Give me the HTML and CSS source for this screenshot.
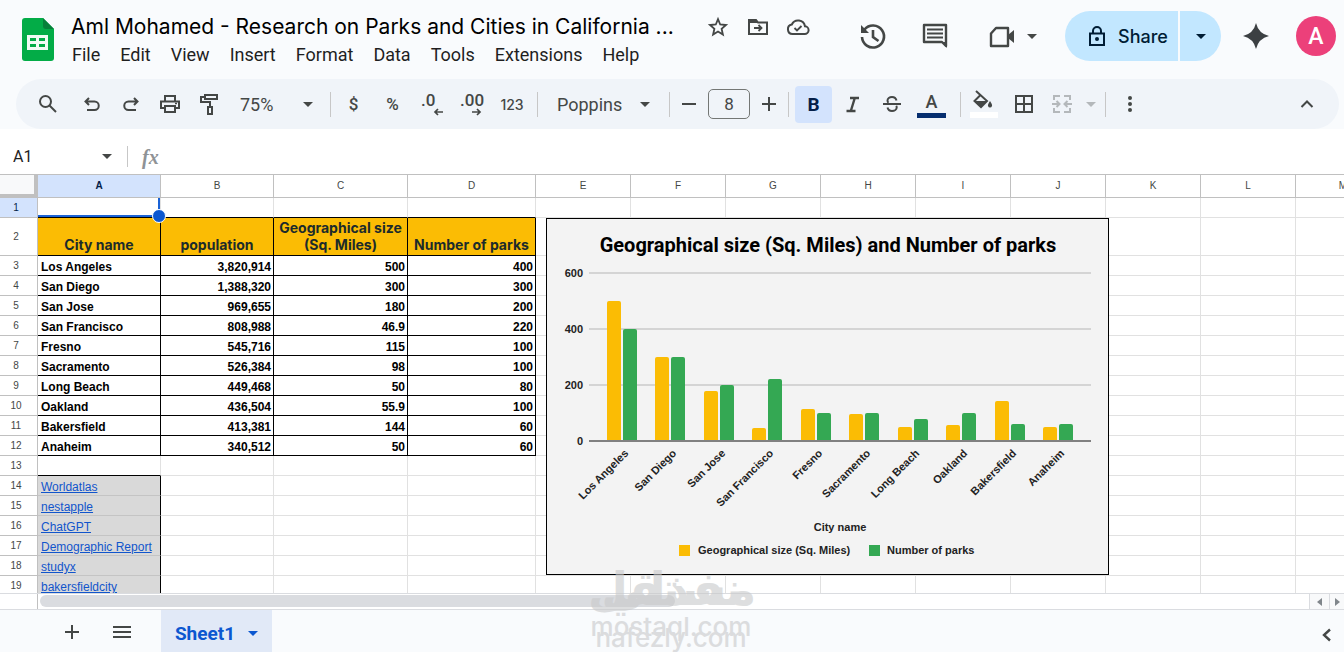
FILE: index.html
```html
<!DOCTYPE html>
<html lang="en">
<head>
<meta charset="utf-8">
<title>Research on Parks and Cities in California</title>
<link rel="stylesheet" href="styles.css">
</head>
<body>
<header class="header">
  <a class="logo" href="#" aria-label="Sheets home"><svg width="32" height="44" viewBox="0 0 32 44"><path d="M3 0h18l11 11v29q0 3-3 3H3q-3 0-3-3V3q0-3 3-3z" fill="#03ac47"/><path d="M21 0l11 11h-8q-3 0-3-3z" fill="#07803a"/><path d="M5 17h21v15H5z" fill="#f1fbf4"/><path d="M8 20h6v3H8zm9 0h6v3h-6zm-9 6h6v3H8zm9 0h6v3h-6z" fill="#03ac47"/></svg></a>
  <div class="doc">
    <div class="doc-top">
      <h1 class="title">Aml Mohamed - Research on Parks and Cities in California ...</h1>
      <button class="mini" aria-label="Star"><svg width="24" height="24" viewBox="0 0 24 24"><path fill="none" stroke="#444746" stroke-width="1.8" d="M12 4.2l2.2 5.3 5.8.5-4.400 3.800 1.300 5.700-4.900-3-4.900 3 1.300-5.700L4 10l5.800-.5z"/></svg></button>
      <button class="mini" aria-label="Move"><svg width="24" height="24" viewBox="0 0 24 24" fill="none" stroke="#444746" stroke-width="2"><path d="M3 6v13h18V7.500h-9L10 5H3z"/><path d="M3 6h8v2H3z" fill="#444746" stroke="none"/><path d="M8 13h7M12.500 10l3 3-3 3" stroke-width="1.800"/></svg></button>
      <button class="mini" aria-label="Saved to Drive"><svg width="24" height="24" viewBox="0 0 24 24" fill="none" stroke="#444746" stroke-width="2"><path d="M6.500 19h12a3.800 3.800 0 0 0 .5-7.700A7 7 0 0 0 5.800 9.500 4.800 4.800 0 0 0 6.500 19z"/><path d="M8.500 13l2.500 2.500 4.500-4.500" stroke-width="1.800"/></svg></button>
    </div>
    <nav class="menu">
      <a href="#">File</a><a href="#">Edit</a><a href="#">View</a><a href="#">Insert</a><a href="#">Format</a><a href="#">Data</a><a href="#">Tools</a><a href="#">Extensions</a><a href="#">Help</a>
    </nav>
  </div>
  <div class="actions">
    <button class="act" aria-label="Version history"><svg width="30" height="30" viewBox="0 0 30 30" fill="none" stroke="#444746" stroke-width="2.600"><path d="M4 16A11 11 0 1 0 6.500 8.500"/><path d="M15 9v7l5.500 4"/><path d="M3 4v8h8z" fill="#444746" stroke="none"/></svg></button>
    <button class="act comments" aria-label="Comments"><svg width="30" height="30" viewBox="0 0 30 30"><path fill="none" stroke="#444746" stroke-width="2.400" stroke-linejoin="round" d="M4 4h22v21l-4-4H4z"/><path d="M22 21h5v6z" fill="#444746"/><path d="M7 8.500h16M7 12.500h16M7 16.500h16" stroke="#444746" stroke-width="2.200"/></svg></button>
    <button class="act meet" aria-label="Meet"><svg width="30" height="30" viewBox="0 0 30 30"><path fill="none" stroke="#444746" stroke-width="2.400" stroke-linejoin="round" d="M9 7h12v18H4V12.500z"/><path d="M21 14l6-5v13l-6-5z" fill="#444746"/></svg><svg width="10" height="5" viewBox="0 0 10 5"><path d="M0 0h10L5 5z" fill="#444746"/></svg></button>
    <div class="share">
      <button class="share-main"><svg width="20" height="22" viewBox="0 0 20 22"><path fill="none" stroke="#001d35" stroke-width="2" d="M3 8.500h14V20H3zM6 8.500V6a4 4 0 0 1 8 0v2.500"/><circle cx="10" cy="14" r="2" fill="#001d35"/></svg>Share</button>
      <button class="share-more" aria-label="Share options"><svg width="10" height="5" viewBox="0 0 10 5"><path d="M0 0h10L5 5z" fill="#001d35"/></svg></button>
    </div>
    <button class="act spark" aria-label="Gemini"><svg width="26" height="26" viewBox="0 0 26 26"><path d="M13 0Q15.500 10.500 26 13 15.500 15.500 13 26 10.500 15.500 0 13 10.500 10.500 13 0z" fill="#3c4043"/></svg></button>
    <button class="avatar">A</button>
  </div>
</header>

<div class="toolbar" role="toolbar">
  <button class="tool first" aria-label="Search"><svg width="20" height="20" viewBox="0 0 20 20" fill="none" stroke="#444746" stroke-width="2"><circle cx="7.500" cy="7.500" r="5.500"/><path d="M11.500 11.500l6.500 6.500"/></svg></button>
  <button class="tool" aria-label="Undo"><svg width="20" height="20" viewBox="0 0 20 20" fill="none" stroke="#444746" stroke-width="2"><path d="M7 4L3.500 7.500 7 11M4 7.500h8.500a4.200 4.200 0 0 1 0 8.500H5"/></svg></button>
  <button class="tool" aria-label="Redo"><svg width="20" height="20" viewBox="0 0 20 20" fill="none" stroke="#444746" stroke-width="2"><path d="M13 4l3.500 3.500L13 11M16 7.500H7.500a4.200 4.200 0 0 0 0 8.500H15"/></svg></button>
  <button class="tool" aria-label="Print"><svg width="20" height="20" viewBox="0 0 20 20" fill="none" stroke="#444746" stroke-width="2"><path d="M5 14H1V7.500h18V14h-4M5 7.500V2h10v5.500M5 12h10v6H5z"/><path d="M15 9.500h2" stroke-width="1.500"/></svg></button>
  <button class="tool" aria-label="Paint format"><svg width="20" height="22" viewBox="0 0 20 22" fill="none" stroke="#444746" stroke-width="2"><path d="M6 2h12v4H6zM6 4H2v5h9v5M9 14h4v7H9z"/></svg></button>
  <label class="pick zoom"><select aria-label="Zoom"><option>75%</option></select><svg width="10" height="5" viewBox="0 0 10 5"><path d="M0 0h10L5 5z" fill="#444746"/></svg></label>
  <span class="sep zoom-sep"></span>
  <button class="tool">$</button>
  <button class="tool">%</button>
  <button class="tool stack" aria-label="Decrease decimals"><span>.0</span><svg width="10" height="8" viewBox="0 0 10 8"><path d="M10 4H2M5 1L2 4l3 3" fill="none" stroke="#444746" stroke-width="1.700"/></svg></button>
  <button class="tool stack" aria-label="Increase decimals"><span>.00</span><svg width="10" height="8" viewBox="0 0 10 8"><path d="M0 4h8M5 1l3 3-3 3" fill="none" stroke="#444746" stroke-width="1.700"/></svg></button>
  <button class="tool num">123</button>
  <span class="sep font-sep"></span>
  <label class="pick font"><select aria-label="Font"><option>Poppins</option></select><svg width="10" height="5" viewBox="0 0 10 5"><path d="M0 0h10L5 5z" fill="#444746"/></svg></label>
  <span class="sep"></span>
  <button class="tool step" aria-label="Decrease font size"><svg width="14" height="14" viewBox="0 0 14 14"><path d="M0 7h14" stroke="#444746" stroke-width="2"/></svg></button>
  <input class="size" aria-label="Font size" value="8">
  <button class="tool step" aria-label="Increase font size"><svg width="14" height="14" viewBox="0 0 14 14"><path d="M0 7h14M7 0v14" stroke="#444746" stroke-width="2"/></svg></button>
  <span class="sep"></span>
  <button class="tool bold">B</button>
  <button class="tool" aria-label="Italic"><svg width="16" height="18" viewBox="0 0 16 18" fill="none" stroke="#444746" stroke-width="2.400"><path d="M5 3h9M1.500 16h9M9.800 3L5.800 16"/></svg></button>
  <button class="tool" aria-label="Strikethrough"><svg width="20" height="20" viewBox="0 0 20 20" fill="none" stroke="#444746" stroke-width="2"><path d="M1 10h18M14.500 6.500C14 4.500 12.500 3 10 3S5.500 4.500 5.500 6.500q0 1.500 1 2.300M5.500 13.500c.5 2 2 3.500 4.500 3.500s4.700-1.500 4.700-3.500q0-1-.5-1.700"/></svg></button>
  <button class="tool color"><span>A</span></button>
  <span class="sep color-sep"></span>
  <button class="tool fill" aria-label="Fill color"><svg width="28" height="28" viewBox="0 0 28 28"><path d="M0 22h28v6H0z" fill="#fff"/><path d="M6 1l11 10-6 6-6.500-6 6-6" fill="none" stroke="#444746" stroke-width="2"/><path d="M4 11h13l-6 6z" fill="#444746"/><path d="M20 11q2.500 3.500 2 5-.5 1.500-2 1.500t-2-1.500q-.5-1.500 2-5z" fill="#444746"/></svg></button>
  <button class="tool" aria-label="Borders"><svg width="20" height="20" viewBox="0 0 20 20" fill="none" stroke="#444746" stroke-width="2"><path d="M2 2h16v16H2zM10 2v16M2 10h16"/></svg></button>
  <button class="tool merge" aria-label="Merge cells"><svg width="20" height="20" viewBox="0 0 20 20" fill="none" stroke="#b4b8bb" stroke-width="2"><path d="M8 2H2v4M12 2h6v4M8 18H2v-4M12 18h6v-4M0 10h7M4.500 7l3 3-3 3M20 10h-7M15.500 7l-3 3 3 3"/></svg><svg width="10" height="5" viewBox="0 0 10 5"><path d="M0 0h10L5 5z" fill="#b4b8bb"/></svg></button>
  <span class="sep"></span>
  <button class="tool more" aria-label="More"><svg width="6" height="18" viewBox="0 0 6 18" fill="#444746"><circle cx="3" cy="3" r="2"/><circle cx="3" cy="9" r="2"/><circle cx="3" cy="15" r="2"/></svg></button>
  <button class="tool collapse" aria-label="Hide menus"><svg width="14" height="10" viewBox="0 0 14 10"><path d="M1.500 8L7 2.500 12.500 8" fill="none" stroke="#444746" stroke-width="2"/></svg></button>
</div>

<div class="formula">
  <label class="pick name"><select aria-label="Name box"><option>A1</option></select><svg width="10" height="5" viewBox="0 0 10 5"><path d="M0 0h10L5 5z" fill="#444746"/></svg></label>
  <span class="sep"></span>
  <label class="fx" for="formula-input">fx</label>
  <input class="formula-input" id="formula-input">
</div>

<main class="sheet">
  <table class="grid">
    <colgroup><col class="c-head"><col class="c-a"><col class="c-b"><col class="c-c"><col class="c-d"><col span="9" class="c-rest"></colgroup>
    <thead><tr id="letters"></tr></thead>
    <tbody id="rows"></tbody>
  </table>
  <div class="cursor"></div>
  <figure class="chart"><svg id="chart" width="561" height="355" viewBox="0 0 561 355" role="img" aria-label="Geographical size and number of parks by city"></svg></figure>
</main>

<div class="scroll">
  <div class="track"><div class="thumb"></div></div>
  <button class="arrow" aria-label="Scroll left"><svg width="6" height="8" viewBox="0 0 6 8"><path d="M5 0v8L0 4z" fill="#80868b"/></svg></button>
  <button class="arrow" aria-label="Scroll right"><svg width="6" height="8" viewBox="0 0 6 8"><path d="M1 0v8l5-4z" fill="#80868b"/></svg></button>
</div>

<footer class="tabs">
  <button class="foot" aria-label="Add sheet"><svg width="14" height="14" viewBox="0 0 14 14"><path d="M0 7h14M7 0v14" stroke="#444746" stroke-width="2"/></svg></button>
  <button class="foot" aria-label="All sheets"><svg width="18" height="12" viewBox="0 0 18 12"><path d="M0 1h18M0 6h18M0 11h18" stroke="#444746" stroke-width="2"/></svg></button>
  <button class="tab">Sheet1<svg width="10" height="5" viewBox="0 0 10 5"><path d="M0 0h10L5 5z" fill="#0b57d0"/></svg></button>
  <button class="foot side" aria-label="Show side panel"><svg width="10" height="14" viewBox="0 0 10 14"><path d="M8 1.500L2 7l6 5.500" fill="none" stroke="#444746" stroke-width="2.400"/></svg></button>
</footer>

<div class="mark" aria-hidden="true">
  <div class="mark-ar"><span lang="ar">مستقل</span><span lang="ar">نفذلي</span></div>
  <div class="mark-en"><span>mostaql.com</span><span>nafezly.com</span></div>
</div>
<script src="script.js"></script>
</body>
</html>
```
FILE: styles.css
```css
* { box-sizing: border-box; }
body {
  margin: 0;
  height: 100vh;
  display: flex;
  flex-direction: column;
  overflow: hidden;
  background: #f9fbfd;
  color: #1f1f1f;
  font-family: Roboto, "Liberation Sans", sans-serif;
}
button, input, select {
  font: inherit;
  color: inherit;
  background: none;
  border: 0;
  padding: 0;
  margin: 0;
}
button { display: flex; align-items: center; justify-content: center; flex-shrink: 0; }
select { appearance: none; }
svg { flex-shrink: 0; display: block; }

/* Header */
.header { display: flex; align-items: flex-start; padding: 11px 8px 11px 22px; height: 79px; flex-shrink: 0; }
.logo { margin: 7px 17px 0 0; }
.doc-top { display: flex; align-items: center; height: 32px; }
.title { margin: 0 28px 0 0; font-family: Inter, sans-serif; font-size: 21px; line-height: 32px; font-weight: 400; white-space: nowrap; color: #000; }
.mini { width: 32px; height: 32px; margin-right: 8px; }
.menu { display: flex; gap: 20px; padding-left: 1px; font-size: 18px; line-height: 24px; }
.menu a { color: #1f1f1f; text-decoration: none; }
.actions { display: flex; align-items: center; margin-left: auto; }
.act { width: 40px; height: 40px; margin-right: 22px; }
.act.comments { margin-right: 26px; }
.act.meet { width: 62px; gap: 10px; }
.share { display: flex; gap: 2px; height: 50px; margin-right: 15px; }
.share-main { width: 113px; gap: 11px; padding-left: 12px; border-radius: 25px 0 0 25px; background: #c2e7ff; color: #001d35; font-family: Inter, sans-serif; font-size: 18px; font-weight: 500; }
.share-more { width: 41px; border-radius: 0 25px 25px 0; background: #c2e7ff; }
.act.spark { margin-right: 20px; }
.avatar { width: 40px; height: 40px; border-radius: 50%; background: #ec407a; color: #fff; font-size: 23px; font-weight: 500; }

/* Toolbar */
.toolbar { display: flex; align-items: center; flex-shrink: 0; height: 50px; margin: 0 5px 0 16px; padding-left: 8px; border-radius: 25px; background: #f0f4f9; color: #444746; font-size: 18px; }
.tool { width: 39px; height: 37px; font-size: 17px; font-weight: 500; }
.tool.first { width: 48px; }
.sep { width: 1px; height: 25px; background: #c7c7c7; flex-shrink: 0; }
.pick { display: flex; align-items: center; }
.pick select { flex: 1; min-width: 0; }
.zoom { width: 102px; padding: 0 17px 0 12px; }
.zoom-sep { margin-right: 3px; }
.stack { flex-direction: column; align-items: flex-end; padding: 0 8px 0 9px; line-height: 16px; }
.stack span { align-self: flex-start; }
.tool.num { width: 44px; font-family: Inter, sans-serif; font-size: 14px; }
.font-sep { margin-left: 3px; }
.font { width: 131px; padding: 0 19px; }
.step { width: 38px; }
.size { width: 42px; height: 30px; border: 1px solid #747775; border-radius: 5px; text-align: center; font-size: 17px; }
.bold { width: 37px; margin: 0 1px 0 6px; border-radius: 4px; background: #d3e3fd; color: #041e49; font-size: 19px; font-weight: 700; }
.color span { width: 29px; height: 27px; border-bottom: 5px solid #062e6f; line-height: 22px; font-size: 18px; margin-top: 1px; }
.color { width: 41px; }
.color-sep { margin: 0 2px 0 8px; }
.fill { width: 41px; }
.merge { width: 62px; gap: 14px; }
.more { margin-left: 4px; }
.collapse { margin: 0 13px 0 auto; }

/* Formula bar */
.formula { display: flex; align-items: center; flex-shrink: 0; height: 45px; padding: 10px 0 0; background: #fff; }
.name { width: 127px; padding: 0 15px 0 13px; font-size: 16px; }
.formula .sep { height: 21px; }
.fx { margin: 0 12px 0 14px; font-family: "Liberation Serif", serif; font-style: italic; font-weight: 700; font-size: 20px; line-height: 22px; color: #8f9396; }
.formula-input { flex: 1; }

/* Spreadsheet */
.sheet { position: relative; flex: 1; min-height: 0; overflow: hidden; background: #fff; border-top: 1px solid #c0c0c0; }
.grid { width: 1391px; table-layout: fixed; border-collapse: separate; border-spacing: 0; font-family: "Liberation Sans", Arial, sans-serif; font-size: 12px; line-height: 15px; }
.c-head { width: 38px; }
.c-a { width: 123px; }
.c-b { width: 113px; }
.c-c { width: 134px; }
.c-d { width: 128px; }
.c-rest { width: 95px; }
.grid th, .grid td { padding: 4px 2px 0; border: 0 solid #e1e1e1; border-width: 0 1px 1px 0; white-space: nowrap; vertical-align: bottom; }
.grid td { height: 20px; }
.grid thead th { height: 23px; padding: 0 0 1px; border-color: #c0c0c0; font-size: 10px; font-weight: 400; vertical-align: middle; color: #444746; }
.grid thead .corner { border-width: 0 4px 4px 0; background: #f8f9fa; }
.grid tbody th { padding: 0 5px 0 0; border-color: #c0c0c0; font-size: 10px; font-weight: 400; vertical-align: middle; color: #444746; }
.grid .picked { background: #d3e3fd; color: #041e49; }
.grid thead .picked { font-weight: 700; }
.grid .over { border-bottom-color: #000; }
.grid .name-row td { height: 38px; }
.grid .label { border-color: #000; background: #fbbc04; padding: 0 1px 2px; text-align: center; font-family: Inter, sans-serif; font-size: 14px; line-height: 17px; font-weight: 700; white-space: normal; color: #1c2b2b; }
.grid .city, .grid .value { border-color: #000; font-weight: 700; color: #000; }
.grid .city, .grid .source { padding-left: 3px; }
.grid .value { text-align: right; }
.grid .source { border-right-color: #000; border-bottom-color: #c4c4c4; background: #d9d9d9; }
.source a { color: #1155cc; }
.cursor { position: absolute; left: 38px; top: 23px; width: 122px; height: 19px; border: 2px solid #1a62d6; border-width: 0 2px 2px 0; }
.cursor::after { content: ""; position: absolute; right: -8px; bottom: -8px; width: 12px; height: 12px; border: 1px solid #fff; border-radius: 50%; background: #0b57d0; }

/* Chart */
.chart { position: absolute; left: 546px; top: 43px; margin: 0; border: 1px solid #000; background: #f3f3f3; font-family: "Liberation Sans", Arial, sans-serif; font-weight: 700; }
.chart text { font-size: 11px; fill: #222; }
.chart .chart-title { font-family: Roboto, sans-serif; font-size: 20px; fill: #000; }
.chart .line { stroke: #d4d4d4; stroke-width: 2; }
.chart .axis { stroke: #808080; stroke-width: 2; }
.chart .area { fill: #fbbc04; }
.chart .parks { fill: #34a853; }

/* Horizontal scroll bar */
.scroll { display: flex; flex-shrink: 0; height: 17px; border-top: 1px solid #dadce0; border-bottom: 1px solid #dadce0; background: #fff; }
.track { flex: 1; margin-left: 37px; padding: 1px 0 0 2px; border-left: 1px solid #c0c0c0; }
.thumb { width: 50%; height: 12px; border-radius: 6px; background: #dadce0; }
.arrow { width: 20px; border-left: 1px solid #dadce0; background: #f8f9fa; }
.arrow:last-child { width: 15px; }

/* Sheet tabs */
.tabs { display: flex; flex-shrink: 0; height: 42px; padding-left: 47px; }
.foot { width: 50px; height: 44px; }
.tab { width: 111px; margin-left: 14px; padding-top: 4px; gap: 13px; background: #e1e9f7; color: #0b57d0; font-size: 19px; font-weight: 700; }
.side { width: 34px; height: 50px; margin-left: auto; }

/* Watermark */
.mark { position: absolute; left: 588px; bottom: 0; width: 166px; height: 88px; color: #c8c9ca; opacity: .6; text-align: center; pointer-events: none; }
.mark-ar, .mark-en { display: grid; justify-items: center; }
.mark-ar span, .mark-en span { grid-area: 1 / 1; }
.mark-ar { height: 50px; font-family: "DejaVu Sans", sans-serif; font-size: 46px; line-height: 50px; font-weight: 700; }
.mark-en { font-family: Inter, sans-serif; font-size: 26px; line-height: 26px; font-weight: 500; }
.mark-en span:last-child { padding-top: 11px; }
```
FILE: script.js
```javascript
const cities = [
  ["Los Angeles", "3,820,914", 500, 400],
  ["San Diego", "1,388,320", 300, 300],
  ["San Jose", "969,655", 180, 200],
  ["San Francisco", "808,988", 46.9, 220],
  ["Fresno", "545,716", 115, 100],
  ["Sacramento", "526,384", 98, 100],
  ["Long Beach", "449,468", 50, 80],
  ["Oakland", "436,504", 55.9, 100],
  ["Bakersfield", "413,381", 144, 60],
  ["Anaheim", "340,512", 50, 60]
];
const labels = ["City name", "population", "Geographical size (Sq. Miles)", "Number of parks"];
const sources = ["Worldatlas", "nestapple", "ChatGPT", "Demographic Report", "studyx", "bakersfieldcity"];

const cell = (text, cls) => `<td class="${cls}">${text}</td>`;
const blank = n => "<td></td>".repeat(n);

document.getElementById("letters").innerHTML = '<th class="corner"></th>' +
  [..."ABCDEFGHIJKLM"].map(c => `<th scope="col"${c === "A" ? ' class="picked"' : ""}>${c}</th>`).join("");

const rows = [
  cell("", "over").repeat(4) + blank(9),
  labels.map(t => cell(t, "label")).join("") + blank(9),
  ...cities.map(c => c.map((v, i) => cell(v, i ? "value" : "city")).join("") + blank(9)),
  cell("", "over") + blank(12),
  ...sources.map(s => cell(`<a href="#">${s}</a>`, "source") + blank(12))
];
document.getElementById("rows").innerHTML = rows.map((html, i) =>
  `<tr${i === 1 ? ' class="name-row"' : ""}><th scope="row"${i ? "" : ' class="picked"'}>${i + 1}</th>${html}</tr>`).join("");

/* Column chart: two bars for each city */
const base = 222, scale = 168 / 600;
const bar = (x, value, cls) => {
  const h = Math.round(value * scale), y = base - h;
  return `<path class="${cls}" d="M${x} ${base}V${y + 2}q0-2 2-2h10q2 0 2 2V${base}z"/>`;
};
let svg = '<text class="chart-title" x="281" y="33" text-anchor="middle">Geographical size (Sq. Miles) and Number of parks</text>';
[600, 400, 200, 0].forEach(v => {
  const y = base - v * scale;
  svg += `<text x="36" y="${y + 4}" text-anchor="end">${v}</text>`;
  if (v) svg += `<path class="line" d="M42 ${y}H544"/>`;
});
cities.forEach(([city, , area, parks], i) => {
  const x = Math.round(60 + i * 48.45);
  svg += bar(x, area, "area") + bar(x + 16, parks, "parks");
  svg += `<text text-anchor="end" transform="translate(${x + 22} 235) rotate(-45)">${city}</text>`;
});
svg += '<path class="axis" d="M42 222H544"/>' +
  '<text x="293" y="312" text-anchor="middle">City name</text>' +
  '<rect class="area" x="132" y="326" width="11" height="11"/><text x="151" y="335">Geographical size (Sq. Miles)</text>' +
  '<rect class="parks" x="322" y="326" width="11" height="11"/><text x="340" y="335">Number of parks</text>';
document.getElementById("chart").innerHTML = svg;
```
